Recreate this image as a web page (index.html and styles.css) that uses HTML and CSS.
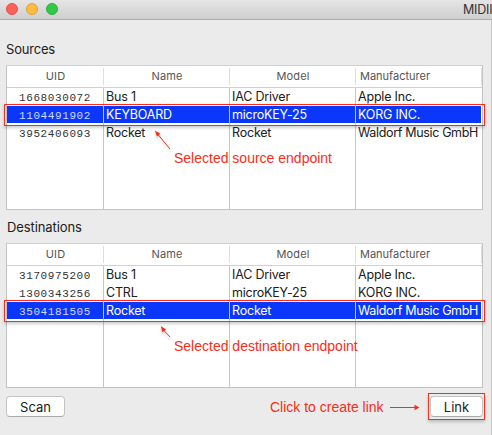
FILE: index.html
```html
<!DOCTYPE html>
<html lang="en">
<head>
<meta charset="utf-8">
<title>MIDI</title>
<link rel="stylesheet" href="styles.css">
</head>
<body>
<div class="window">
  <header class="titlebar">
    <span class="light close"></span><span class="light minimize"></span><span class="light expand"></span>
    <span class="window-title">MIDII</span>
  </header>
  <main class="content">
    <h2 class="label label-sources">Sources</h2>
    <section class="table">
      <div class="row head"><span>UID</span><span>Name</span><span>Model</span><span>Manufacturer</span></div>
      <div class="row"><span class="uid">1668030072</span><span>Bus 1</span><span>IAC Driver</span><span>Apple Inc.</span></div>
      <div class="row selected"><span class="uid">1104491902</span><span>KEYBOARD</span><span>microKEY-25</span><span>KORG INC.</span></div>
      <div class="row"><span class="uid">3952406093</span><span>Rocket</span><span>Rocket</span><span class="long">Waldorf Music GmbH</span></div>
      <div class="row filler"><span></span><span></span><span></span><span></span></div>
      <div class="outline outline-source"></div>
    </section>
    <h2 class="label label-dest">Destinations</h2>
    <section class="table">
      <div class="row head"><span>UID</span><span>Name</span><span>Model</span><span>Manufacturer</span></div>
      <div class="row"><span class="uid">3170975200</span><span>Bus 1</span><span>IAC Driver</span><span>Apple Inc.</span></div>
      <div class="row"><span class="uid">1300343256</span><span>CTRL</span><span>microKEY-25</span><span>KORG INC.</span></div>
      <div class="row selected"><span class="uid">3504181505</span><span>Rocket</span><span>Rocket</span><span class="long">Waldorf Music GmbH</span></div>
      <div class="row filler"><span></span><span></span><span></span><span></span></div>
      <div class="outline outline-dest"></div>
    </section>
    <footer class="actions">
      <button class="button scan">Scan</button>
      <span class="hint">Click to create link</span>
      <svg class="hint-arrow" width="30" height="8" viewBox="0 0 30 8"><path d="M0 4.5H25" stroke="#fb2c18"/><path d="M24.500 1.800L29.500 4.500L24.500 7.200Z" fill="#fb2c18"/></svg>
      <span class="link-box"><button class="button link">Link</button></span>
    </footer>
  </main>
  <svg class="arrows" width="492" height="435" viewBox="0 0 492 435">
    <g stroke="#fb2c18" fill="#fb2c18">
      <path d="M170 149L158 134.500"/><path d="M154.800 130.500L160.500 133.800L157 136.600Z" stroke="none"/>
      <path d="M170 337L163.500 330"/><path d="M160.700 326L166.100 329.600L162.400 332.300Z" stroke="none"/>
    </g>
  </svg>
  <span class="note note-source">Selected source endpoint</span>
  <span class="note note-dest">Selected destination endpoint</span>
</div>
</body>
</html>
```
FILE: styles.css
```css
* { box-sizing: border-box; }
body { margin: 0; font-family: Inter, "Liberation Sans", sans-serif; color: #202020; }
.window { position: relative; width: 492px; height: 435px; overflow: hidden; background: #ebebeb; }
.titlebar { display: flex; align-items: center; gap: 8px; height: 20px; padding: 0 0 2px 6px; background: linear-gradient(#e5e5e5, #cfcfcf); border-bottom: 1px solid #adadad; }
.light { flex: none; width: 12px; height: 12px; border-radius: 50%; border: 1px solid; }
.close { background: #fc605c; border-color: #e4504c; }
.minimize { background: #fdbc40; border-color: #e0a236; }
.expand { background: #34c84a; border-color: #2dae3e; }
.window-title { margin: 2px 0 0 397px; font-size: 12.5px; letter-spacing: -.2px; line-height: 16px; white-space: nowrap; color: #333; }
.content { height: 415px; padding: 20px 6px 0 6px; border-right: 1px solid #c6c6c6; }
.label { margin: 0; font-weight: 400; font-size: 13px; line-height: 18px; letter-spacing: -.2px; }
.label-sources { height: 25px; }
.label-dest { height: 33px; padding: 8px 0 0 1px; letter-spacing: -.1px; }
.table { position: relative; display: flex; flex-direction: column; width: 477px; height: 145px; background: #fff; border: 1px solid #c2c2c2; border-top-color: #d0d0d0; }
.row { display: grid; grid-template-columns: 97px 126px 126px 1fr; height: 18px; font-size: 12.5px; letter-spacing: -.2px; line-height: 17px; }
.row > span { padding-left: 2px; white-space: nowrap; border-right: 1px solid #c6c6c6; }
.row > span:last-child { border-right: 0; }
.row .long { letter-spacing: -.34px; }
.row .uid { padding: 2px 0 0 12px; font: 11px/16px "Liberation Mono", monospace; letter-spacing: .6px; color: #333; }
.row.head { height: 22px; padding: 2px 0; border-bottom: 1px solid #d0d0d0; font-size: 11px; letter-spacing: .1px; line-height: 17px; color: #555; }
.head > span { padding-left: 1px; text-align: center; border-color: #dedede; }
.head > span:last-child { text-align: left; padding-left: 4px; letter-spacing: 0; border-right: 1px solid #dedede; }
.row.selected { height: 17px; margin: 0 1px 1px 0; color: #fff; background: #0b37fb; }
.row.selected .uid { color: #cfd8ff; }
.row.filler { flex: 1; height: auto; }
.outline { position: absolute; left: -3px; width: 481px; height: 22px; border: 1px solid #fb2c18; box-shadow: 0 2px 3px rgba(0,0,0,.2); }
.outline-source { top: 38px; }
.outline-dest { top: 56px; }
.actions { display: flex; align-items: flex-start; padding-top: 5px; }
.button { height: 21px; margin: 3px 0 0; padding: 0; border: 1px solid #c4c4c4; border-bottom-color: #aaa; border-radius: 4px; background: #fff; font: 13px/18px Inter, sans-serif; color: #202020; }
.scan { width: 59px; }
.hint { flex: none; width: 120px; margin: 5px 0 0 205px; font: 14px/18px "Liberation Sans", sans-serif; color: #fb2c18; white-space: nowrap; }
.hint-arrow { flex: none; margin-top: 10px; }
.link-box { flex: none; width: 57px; height: 27px; margin-left: 8px; padding-left: 1px; border: 1px solid #fb2c18; box-shadow: 0 2px 3px rgba(0,0,0,.2); }
.link-box .button { display: block; width: 53px; margin-top: 2px; }
.arrows { position: absolute; inset: 0; filter: drop-shadow(0 2px 1px rgba(0,0,0,.2)); }
.note { position: absolute; left: 174px; font: 14px/18px "Liberation Sans", sans-serif; color: #fb2c18; white-space: nowrap; }
.note-source { top: 149px; }
.note-dest { top: 337px; }
```
